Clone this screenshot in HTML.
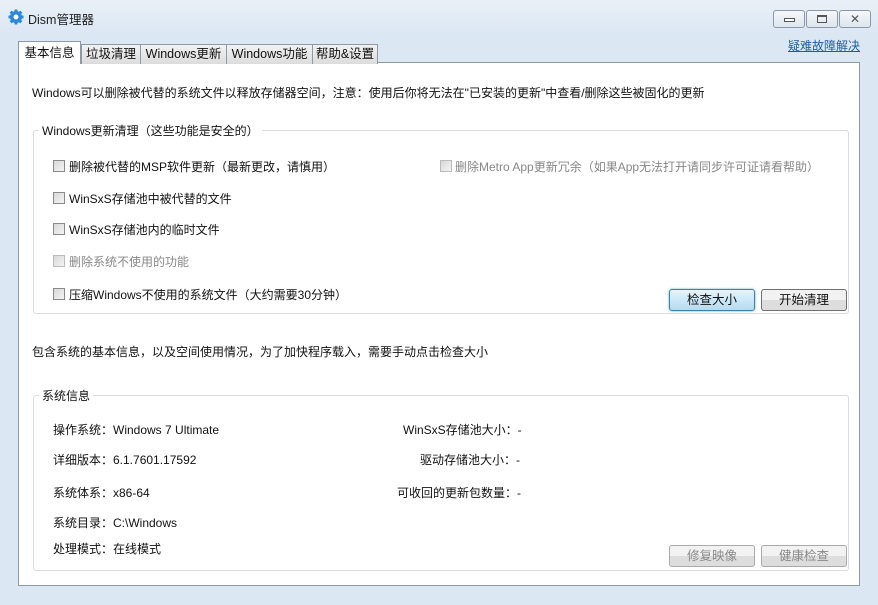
<html><head><style>
body{margin:0;width:878px;height:605px;background:#dce7f4;font-family:"Liberation Sans","Noto Sans CJK SC",sans-serif;font-size:12px;color:#111;position:relative;overflow:hidden}
.a{position:absolute;white-space:nowrap}
.tab{position:absolute;top:44px;height:19px;border:1px solid #8e9aa8;border-bottom:none;background:linear-gradient(#f2f2f2,#dcdcdc);font-size:12.5px;line-height:19px;text-align:center}
.panel{position:absolute;left:18px;top:62px;width:840px;height:522px;background:#fff;border:1px solid #8d99a6}
.grp{position:absolute;border:1px solid #dcdcdc;border-radius:3px}
.leg{position:absolute;background:#fff;padding:0 3px;top:-9px;left:5px}
.cb{position:absolute;width:10px;height:10px;border:1px solid #8a8a8a;background:linear-gradient(135deg,#d8d8d8,#f4f4f4)}
.btn{position:absolute;height:20px;border:1px solid #707070;border-radius:3px;background:linear-gradient(#f2f2f2 50%,#dddddd 50%);text-align:center;line-height:20px;font-size:12.5px}
.wb{position:absolute;top:10px;width:30px;height:16px;border:1px solid #8d99a6;border-radius:3px;background:linear-gradient(#f5f8fb,#dde5ee)}
</style></head><body>
<div class="a" style="left:0;top:0;width:878px;height:34px;background:linear-gradient(#e9f0f7,#dce7f4)"></div>
<svg class="a" style="left:8px;top:9px" width="16" height="16" viewBox="0 0 16 16"><circle cx="8" cy="8" r="6" fill="#2a8ad8"/><g stroke="#2a8ad8" stroke-width="3"><line x1="8" y1="0.5" x2="8" y2="15.5"/><line x1="0.5" y1="8" x2="15.5" y2="8"/><line x1="2.7" y1="2.7" x2="13.3" y2="13.3"/><line x1="13.3" y1="2.7" x2="2.7" y2="13.3"/></g><circle cx="8" cy="8" r="2.5" fill="#fff"/></svg>
<div class="a" style="left:28px;top:9px;font-size:12.5px;color:#222">Dism管理器</div>
<div class="wb" style="left:773px"><div class="a" style="left:10px;top:7px;width:9px;height:2px;border:1px solid #555;background:#fff"></div></div>
<div class="wb" style="left:806px"><div class="a" style="left:10px;top:4px;width:8px;height:5px;border:1px solid #555;border-top-width:2px"></div></div>
<div class="wb" style="left:839px;text-align:center;line-height:16px;color:#555;font-size:12px">✕</div>
<div class="a" style="left:788px;top:37px;color:#1a5ea8;text-decoration:underline">疑难故障解决</div>
<div class="panel"></div>
<div class="tab" style="left:81px;width:58px">垃圾清理</div>
<div class="tab" style="left:140px;width:85px">Windows更新</div>
<div class="tab" style="left:226px;width:85px">Windows功能</div>
<div class="tab" style="left:312px;width:64px">帮助&amp;设置</div>
<div class="tab" style="left:18px;top:41px;width:61px;height:22px;background:#fff;border-color:#8d99a6;line-height:22px">基本信息</div>
<div class="a" style="left:32px;top:84px">Windows可以删除被代替的系统文件以释放存储器空间，注意：使用后你将无法在"已安装的更新"中查看/删除这些被固化的更新</div>
<div class="grp" style="left:33px;top:130px;width:814px;height:182px"><div class="leg">Windows更新清理（这些功能是安全的）</div></div>
<div class="cb" style="left:53px;top:160px"></div><div class="a" style="left:69px;top:158px">删除被代替的MSP软件更新（最新更改，请慎用）</div>
<div class="cb" style="left:53px;top:192px"></div><div class="a" style="left:69px;top:190px">WinSxS存储池中被代替的文件</div>
<div class="cb" style="left:53px;top:223px"></div><div class="a" style="left:69px;top:221px">WinSxS存储池内的临时文件</div>
<div class="cb" style="left:53px;top:255px;border-color:#bbb"></div><div class="a" style="left:69px;top:253px;color:#888">删除系统不使用的功能</div>
<div class="cb" style="left:53px;top:288px"></div><div class="a" style="left:69px;top:286px">压缩Windows不使用的系统文件（大约需要30分钟）</div>
<div class="cb" style="left:440px;top:160px;border-color:#bbb"></div><div class="a" style="left:455px;top:158px;color:#888">删除Metro App更新冗余（如果App无法打开请同步许可证请看帮助）</div>
<div class="btn" style="left:669px;top:289px;width:84px;border-color:#3c7fb1;background:linear-gradient(#e5f4fc,#b2dcf4);box-shadow:0 0 2px #5ab">检查大小</div>
<div class="btn" style="left:761px;top:289px;width:84px">开始清理</div>
<div class="a" style="left:32px;top:343px">包含系统的基本信息，以及空间使用情况，为了加快程序载入，需要手动点击检查大小</div>
<div class="grp" style="left:33px;top:395px;width:814px;height:174px"><div class="leg">系统信息</div></div>
<div class="a" style="left:53px;top:421px">操作系统：Windows 7 Ultimate</div>
<div class="a" style="left:53px;top:451px">详细版本：6.1.7601.17592</div>
<div class="a" style="left:53px;top:484px">系统体系：x86-64</div>
<div class="a" style="left:53px;top:514px">系统目录：C:\Windows</div>
<div class="a" style="left:53px;top:540px">处理模式：在线模式</div>
<div class="a" style="left:403px;top:421px">WinSxS存储池大小：-</div>
<div class="a" style="left:420px;top:451px">驱动存储池大小：-</div>
<div class="a" style="left:397px;top:484px">可收回的更新包数量：-</div>
<div class="btn" style="left:669px;top:545px;width:84px;color:#888;border-color:#aaa">修复映像</div>
<div class="btn" style="left:761px;top:545px;width:84px;color:#888;border-color:#aaa">健康检查</div>
</body></html>
